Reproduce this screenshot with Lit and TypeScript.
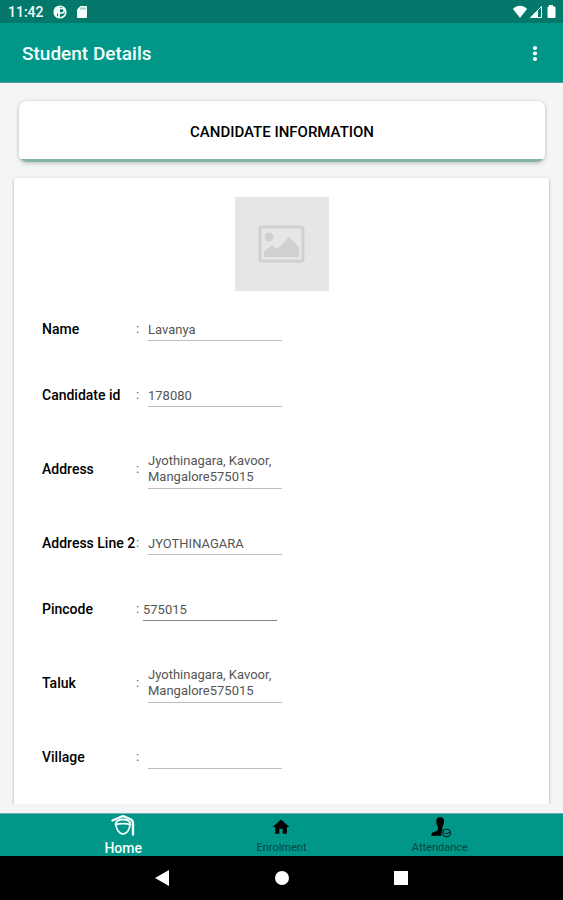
import { LitElement, html, css, svg } from "lit";
import { customElement } from "lit/decorators.js";
import { classMap } from "lit/directives/class-map.js";

interface Field {
  id: string;
  label: string;
  value: string;
  multiline?: boolean;
  tight?: boolean;
}

const fields: Field[] = [
  { id: "name", label: "Name", value: "Lavanya" },
  { id: "candidate-id", label: "Candidate id", value: "178080" },
  { id: "address", label: "Address", value: "Jyothinagara, Kavoor, Mangalore575015", multiline: true },
  { id: "address2", label: "Address Line 2", value: "JYOTHINAGARA" },
  { id: "pincode", label: "Pincode", value: "575015", tight: true },
  { id: "taluk", label: "Taluk", value: "Jyothinagara, Kavoor, Mangalore575015", multiline: true },
  { id: "village", label: "Village", value: "" },
];

const graduateIcon = svg`
  <g fill="none" stroke="currentColor" stroke-width="1.800" stroke-linejoin="round" stroke-linecap="round">
    <path d="M1.500 5.500 12 1l8 3.500c1.500.8 2 1.800 2 3.500v11.500" stroke-width="2.400"/>
    <path d="M4.500 9.500C5 5.500 8.500 4.500 12 4.500s7 1 7.500 5"/>
    <path d="M5 9.500c2.500-1.300 11.500-1.300 14 0-.2 5.500-3.500 9.500-7 9.500s-6.800-4-7-9.500z"/>
  </g>`;
const houseIcon = svg`
  <path fill="currentColor" d="M10 20v-6h4v6h5v-8h3L12 3 2 12h3v8z"/>`;
const personIcon = svg`
  <path fill="currentColor" d="M8 5.500C8 2.500 9.800 1 12.200 1S16.500 2.500 16.500 5.500c0 3-.8 5-1.900 6.200V16c-1.400 1.600-1.500 3.500-.6 5.500H2.500c0-2.600 1-3.300 3.500-4.200 2.500-.8 3.700-1.400 3.700-2.800v-2.800C8.600 10.500 8 8.500 8 5.500z"/>
  <g fill="none" stroke="currentColor" stroke-width="1">
    <circle cx="19.200" cy="18.500" r="4.300"/>
    <path d="M17 18.500l2 1 3.500-2"/>
  </g>`;

@customElement("app-root")
export class AppRoot extends LitElement {
  static styles = css`
    :host {
      display: flex;
      flex-direction: column;
      height: 100vh;
      background: #f4f5f6;
      color: #111;
      font-family: Roboto, "Liberation Sans", sans-serif;
      font-size: 13px;
      line-height: 16px;
    }
    * {
      box-sizing: border-box;
    }
    svg {
      display: block;
    }
    button {
      border: 0;
      padding: 0;
      background: none;
      color: inherit;
    }
    .status {
      display: flex;
      align-items: center;
      gap: 9px;
      height: 23px;
      flex: none;
      padding: 0 6px 0 8px;
      background: #03786b;
      color: #f4fffd;
      font-size: 14px;
      font-weight: 500;
    }
    .signals {
      display: flex;
      align-items: center;
      gap: 2px;
      margin-left: auto;
    }
    .appbar {
      display: flex;
      align-items: center;
      justify-content: space-between;
      height: 60px;
      flex: none;
      padding: 2px 20px 0 22px;
      background: #009688;
      border-bottom: 1px solid #5d9c94;
      color: #f4fffd;
    }
    .appbar h1 {
      margin: 0;
      font-size: 19px;
      line-height: 24px;
      font-weight: 500;
    }
    main {
      flex: 1;
      min-height: 0;
      overflow: hidden;
      padding: 18px 14px 0;
      margin-bottom: 9px;
    }
    .section-title {
      display: flex;
      align-items: center;
      justify-content: center;
      height: 61px;
      margin: 0 4px 16px 5px;
      border-radius: 8px;
      background: linear-gradient(to top, #86b5a7 3px, #fff 3px);
      box-shadow: 0 1px 4px rgba(0, 0, 0, 0.25);
      color: #000;
      font-size: 15px;
      font-weight: 500;
    }
    .card {
      padding: 19px 28px 42px;
      border-radius: 3px;
      background: #fff;
      box-shadow: 0 1px 3px rgba(0, 0, 0, 0.35);
    }
    .photo {
      display: flex;
      align-items: center;
      justify-content: center;
      width: 94px;
      height: 94px;
      margin: 0 auto 26px;
      background: #e6e6e6;
    }
    form {
      display: grid;
      gap: 42px;
    }
    .field {
      display: grid;
      grid-template-columns: 94px 12px 134px;
      align-items: center;
    }
    .field.tight {
      grid-template-columns: 94px 7px 134px;
    }
    .field label {
      color: #000;
      font-size: 14px;
      font-weight: 500;
      white-space: nowrap;
    }
    .colon {
      color: #666;
    }
    .entry {
      display: block;
      width: 100%;
      margin: 0;
      padding: 3px 0;
      border: 0;
      border-top: 1px solid transparent;
      border-bottom: 1px solid #bdbdbd;
      border-radius: 0;
      outline: 0;
      background: none;
      color: #555;
      font: inherit;
      font-weight: 400;
      resize: none;
      overflow: hidden;
    }
    input.entry {
      height: 24px;
    }
    textarea.entry {
      height: 40px;
    }
    .tight .entry {
      border-bottom-color: #858585;
    }
    .tabs {
      display: grid;
      grid-template-columns: repeat(3, 1fr);
      height: 43px;
      flex: none;
      padding: 0 44px;
      border-top: 1px solid #6fb5ad;
      background: #009688;
    }
    .tab {
      display: flex;
      flex-direction: column;
      align-items: center;
      justify-content: flex-end;
      color: #000;
      text-decoration: none;
    }
    .tab-label {
      color: #02493f;
      font-size: 11px;
    }
    .tab.active,
    .tab.active .tab-label {
      color: #f4fffd;
    }
    .tab.active .tab-label {
      font-size: 14px;
      font-weight: 500;
    }
    .tab-icon {
      display: flex;
      align-items: center;
      height: 26px;
    }
    .system {
      display: flex;
      align-items: center;
      justify-content: center;
      gap: 104px;
      height: 44px;
      flex: none;
      background: #000;
      color: #fff;
    }
  `;

  private renderField(f: Field) {
    return html`
      <div class=${classMap({ field: true, tight: !!f.tight })}>
        <label for=${f.id}>${f.label}</label>
        <span class="colon">:</span>
        ${f.multiline
          ? html`<textarea class="entry" id=${f.id} rows="2" .value=${f.value}></textarea>`
          : html`<input class="entry" id=${f.id} type="text" .value=${f.value} />`}
      </div>
    `;
  }

  private renderTab(label: string, icon: unknown, size: number, active = false) {
    return html`
      <a class=${classMap({ tab: true, active })} href="#${label.toLowerCase()}">
        <span class="tab-icon">
          <svg width=${size} height=${size} viewBox="0 0 24 24" aria-hidden="true">${icon}</svg>
        </span>
        <span class="tab-label">${label}</span>
      </a>
    `;
  }

  render() {
    return html`
      <div class="status">
        <span>11:42</span>
        <svg width="14" height="14" viewBox="0 0 14 14" aria-hidden="true">
          <circle cx="7" cy="7" r="5.800" fill="none" stroke="currentColor" stroke-width="1.600" />
          <path d="M2 2.500 7 1v12H5V8.500H4V12L2 10z" fill="currentColor" />
          <path d="M6 3.500h3a2 2 0 0 1 0 4.500H6z" fill="none" stroke="currentColor" stroke-width="1.600" />
        </svg>
        <svg width="12" height="14" viewBox="0 0 12 14" aria-hidden="true">
          <path d="M4.500 1H10a1 1 0 0 1 1 1v10a1 1 0 0 1-1 1H2a1 1 0 0 1-1-1V4.500z" fill="currentColor" />
          <path d="M5 2.500v2M7 2.500v2M9 2.500v2" stroke="#03786b" stroke-width=".7" />
        </svg>
        <div class="signals">
          <svg width="14" height="14" viewBox="0 0 14 14" aria-hidden="true">
            <path d="M0 4C4-.2 10-.2 14 4L7 13z" fill="currentColor" />
          </svg>
          <svg width="14" height="14" viewBox="0 0 14 14" aria-hidden="true">
            <path d="M12.500 1.500v11H1.500z" fill="none" stroke="currentColor" />
            <path d="M1 13 9 5v8z" fill="currentColor" />
          </svg>
          <svg width="12" height="14" viewBox="0 0 12 14" aria-hidden="true">
            <path d="M4 0h4v1.500h1.500a1 1 0 0 1 1 1V12a1 1 0 0 1-1 1h-6a1 1 0 0 1-1-1V2.500a1 1 0 0 1 1-1H4z" fill="currentColor" />
          </svg>
        </div>
      </div>
      <header class="appbar">
        <h1>Student Details</h1>
        <button type="button" aria-label="More options">
          <svg width="16" height="20" viewBox="0 0 16 20">
            <g fill="currentColor">
              <circle cx="8" cy="4" r="2.100" />
              <circle cx="8" cy="9.500" r="2.100" />
              <circle cx="8" cy="15" r="2.100" />
            </g>
          </svg>
        </button>
      </header>
      <main>
        <h2 class="section-title">CANDIDATE INFORMATION</h2>
        <section class="card">
          <div class="photo" role="img" aria-label="Candidate photo">
            <svg width="48" height="40" viewBox="0 0 48 40">
              <rect x="2" y="3" width="43" height="34" rx="2" fill="none" stroke="#d0d0d0" stroke-width="3" />
              <circle cx="11" cy="13" r="4.500" fill="#d0d0d0" />
              <path d="M6 33v-5l8-7 5 4 12-12 10 10v10z" fill="#d0d0d0" />
            </svg>
          </div>
          <form>${fields.map((f) => this.renderField(f))}</form>
        </section>
      </main>
      <nav class="tabs">
        ${this.renderTab("Home", graduateIcon, 24, true)}
        ${this.renderTab("Enrolment", houseIcon, 20)}
        ${this.renderTab("Attendance", personIcon, 22)}
      </nav>
      <div class="system">
        <button type="button" aria-label="Back">
          <svg width="16" height="16" viewBox="0 0 16 16"><path d="M1 8 15 0v16z" fill="currentColor" /></svg>
        </button>
        <button type="button" aria-label="Home screen">
          <svg width="16" height="16" viewBox="0 0 16 16"><circle cx="8" cy="8" r="7" fill="currentColor" /></svg>
        </button>
        <button type="button" aria-label="Recent apps">
          <svg width="16" height="16" viewBox="0 0 16 16"><path d="M0 1h14v14H0z" fill="currentColor" /></svg>
        </button>
      </div>
    `;
  }
}
